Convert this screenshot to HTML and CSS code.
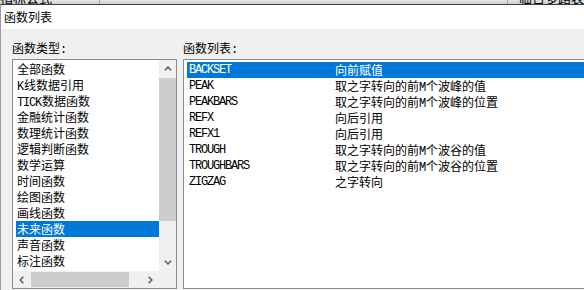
FILE: index.html
```html
<!DOCTYPE html>
<html>
<head>
  <title>函数列表</title>
  <link rel="stylesheet" href="styles.css">
</head>
<body>
  <div class="backdrop">
    <div class="bg-cell bg-cell-a"><span class="bg-text">指标公式</span></div>
    <div class="bg-cell bg-cell-b"></div>
    <div class="bg-cell bg-cell-c"><span class="bg-text">临日多路表</span></div>
  </div>

  <div class="window">
    <div class="titlebar">函数列表</div>
    <div class="body">
      <div class="col col-left">
        <div class="label">函数类型<span class="mono">:</span></div>
        <div class="listbox typebox">
          <div class="items">
            <div class="item">全部函数</div>
            <div class="item"><span class="mono">K</span>线数据引用</div>
            <div class="item"><span class="mono">TICK</span>数据函数</div>
            <div class="item">金融统计函数</div>
            <div class="item">数理统计函数</div>
            <div class="item">逻辑判断函数</div>
            <div class="item">数学运算</div>
            <div class="item">时间函数</div>
            <div class="item">绘图函数</div>
            <div class="item">画线函数</div>
            <div class="item sel">未来函数</div>
            <div class="item">声音函数</div>
            <div class="item">标注函数</div>
          </div>
          <div class="vscroll">
            <div class="arrow">
              <svg width="8" height="5" viewBox="0 0 8 5"><polyline points="0.8,4.3 4,1.2 7.2,4.3" fill="none" stroke="#606060" stroke-width="1.6"/></svg>
            </div>
            <div class="vthumb"></div>
            <div class="track"></div>
            <div class="arrow">
              <svg width="8" height="5" viewBox="0 0 8 5"><polyline points="0.8,0.7 4,3.8 7.2,0.7" fill="none" stroke="#606060" stroke-width="1.6"/></svg>
            </div>
          </div>
          <div class="hscroll">
            <div class="arrow">
              <svg width="5" height="8" viewBox="0 0 5 8"><polyline points="4.3,0.8 1.2,4 4.3,7.2" fill="none" stroke="#606060" stroke-width="1.6"/></svg>
            </div>
            <div class="hthumb"></div>
            <div class="track"></div>
            <div class="arrow">
              <svg width="5" height="8" viewBox="0 0 5 8"><polyline points="0.7,0.8 3.8,4 0.7,7.2" fill="none" stroke="#606060" stroke-width="1.6"/></svg>
            </div>
          </div>
          <div class="corner"></div>
        </div>
      </div>

      <div class="col col-right">
        <div class="label">函数列表<span class="mono">:</span></div>
        <div class="listbox funcbox">
          <div class="row sel"><span class="name">BACKSET</span><span>向前赋值</span></div>
          <div class="row"><span class="name">PEAK</span><span>取之字转向的前<span class="mono">M</span>个波峰的值</span></div>
          <div class="row"><span class="name">PEAKBARS</span><span>取之字转向的前<span class="mono">M</span>个波峰的位置</span></div>
          <div class="row"><span class="name">REFX</span><span>向后引用</span></div>
          <div class="row"><span class="name">REFX1</span><span>向后引用</span></div>
          <div class="row"><span class="name">TROUGH</span><span>取之字转向的前<span class="mono">M</span>个波谷的值</span></div>
          <div class="row"><span class="name">TROUGHBARS</span><span>取之字转向的前<span class="mono">M</span>个波谷的位置</span></div>
          <div class="row"><span class="name">ZIGZAG</span><span>之字转向</span></div>
        </div>
      </div>
    </div>
  </div>
</body>
</html>
```

FILE: styles.css
```css
/* dialog: function list */
body {
  margin: 0;
  width: 584px;
  height: 290px;
  overflow: hidden;
  font-family: "Noto Sans CJK SC", sans-serif;
  font-size: 12px;
  color: #000;
  background: #f0f0f0;
}

.mono {
  font-family: "Liberation Mono", monospace;
  font-size: 12px;
  letter-spacing: -1.2px;
  margin-right: 1px;
}

/* window behind the dialog, only its lower edge shows */
.backdrop {
  display: flex;
  height: 4px;
  overflow: hidden;
  background: linear-gradient(#e4e4e4, #cfcfcf);
}

.bg-cell {
  height: 4px;
}

.bg-cell-a {
  width: 99px;
  border-right: 1px solid #a8a8a8;
}

.bg-cell-b {
  width: 407px;
  border-right: 1px solid #a8a8a8;
}

.bg-cell-c {
  padding-left: 11px;
}

.bg-text {
  display: block;
  margin-top: -9px;
  line-height: 13px;
  font-size: 13px;
  white-space: nowrap;
}

.window {
  height: 285px;
  border-top: 1px solid #3f3f3f;
  border-left: 1px solid #9a9a9a;
}

.titlebar {
  height: 24px;
  line-height: 24px;
  padding-left: 3px;
  background: #fff;
  font-size: 12px;
}

.body {
  display: flex;
  gap: 6px;
  padding: 11px 0 0 11px;
  background: #f0f0f0;
}

.col-left {
  width: 165px;
  flex-shrink: 0;
}

.col-right {
  width: 430px;
  flex-shrink: 0;
}

.label {
  height: 16px;
  line-height: 16px;
  margin-bottom: 3px;
  white-space: nowrap;
}

.listbox {
  box-sizing: border-box;
  height: 230px;
  border: 1px solid #8d8d8d;
  background: #fff;
}

/* left list with both scrollbars */
.typebox {
  display: grid;
  grid-template-columns: 146px 17px;
  grid-template-rows: 211px 17px;
}

.items {
  padding: 1px 0 0 3px;
  overflow: hidden;
}

.item {
  height: 16px;
  line-height: 16px;
  padding-left: 1px;
  white-space: nowrap;
}

.sel {
  background: #0078d7;
  color: #fff;
}

.vscroll {
  display: flex;
  flex-direction: column;
  background: #f0f0f0;
}

.hscroll {
  display: flex;
  background: #f0f0f0;
}

.arrow {
  width: 17px;
  height: 17px;
  flex-shrink: 0;
  display: flex;
  align-items: center;
  justify-content: center;
}

.track {
  flex: 1;
}

.vthumb {
  height: 143px;
  margin-top: 1px;
  background: #cdcdcd;
}

.hthumb {
  width: 98px;
  margin: 1px 0 1px 1px;
  background: #cdcdcd;
}

.corner {
  background: #f0f0f0;
}

/* right list */
.funcbox {
  padding: 2px 0 0 3px;
}

.row {
  display: grid;
  grid-template-columns: 148px 1fr;
  height: 16px;
  line-height: 16px;
  white-space: nowrap;
}

.name {
  padding-left: 2px;
  font-family: "Liberation Mono", monospace;
  font-size: 12px;
  letter-spacing: -1.2px;
}
```
